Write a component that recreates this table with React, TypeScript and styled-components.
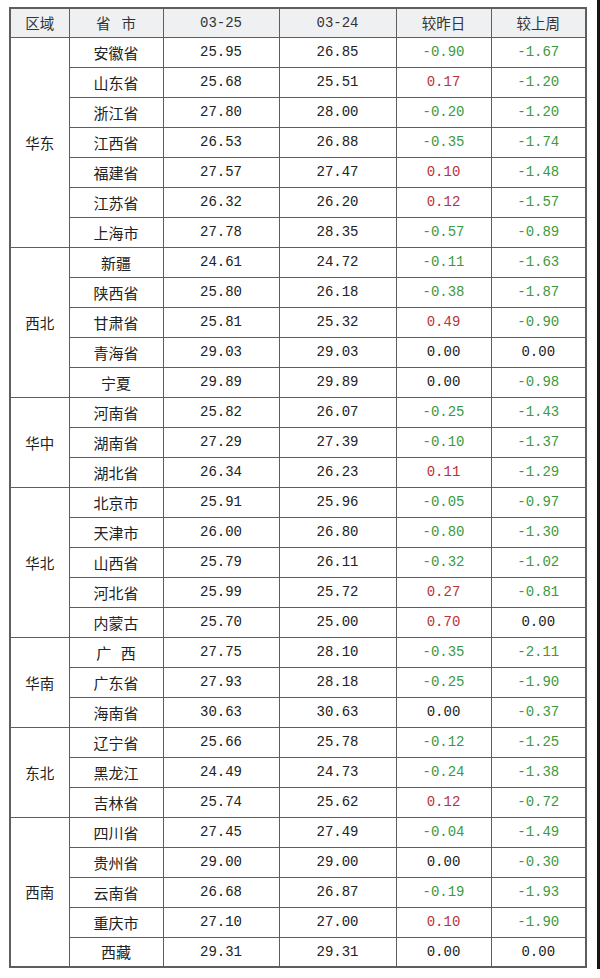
import styled, { createGlobalStyle } from 'styled-components'

type Row = [string, string, string, string, string]

const regions: { name: string; rows: Row[] }[] = [
	{
		name: '华东',
		rows: [
			['安徽省', '25.95', '26.85', '-0.90', '-1.67'],
			['山东省', '25.68', '25.51', '0.17', '-1.20'],
			['浙江省', '27.80', '28.00', '-0.20', '-1.20'],
			['江西省', '26.53', '26.88', '-0.35', '-1.74'],
			['福建省', '27.57', '27.47', '0.10', '-1.48'],
			['江苏省', '26.32', '26.20', '0.12', '-1.57'],
			['上海市', '27.78', '28.35', '-0.57', '-0.89'],
		],
	},
	{
		name: '西北',
		rows: [
			['新疆', '24.61', '24.72', '-0.11', '-1.63'],
			['陕西省', '25.80', '26.18', '-0.38', '-1.87'],
			['甘肃省', '25.81', '25.32', '0.49', '-0.90'],
			['青海省', '29.03', '29.03', '0.00', '0.00'],
			['宁夏', '29.89', '29.89', '0.00', '-0.98'],
		],
	},
	{
		name: '华中',
		rows: [
			['河南省', '25.82', '26.07', '-0.25', '-1.43'],
			['湖南省', '27.29', '27.39', '-0.10', '-1.37'],
			['湖北省', '26.34', '26.23', '0.11', '-1.29'],
		],
	},
	{
		name: '华北',
		rows: [
			['北京市', '25.91', '25.96', '-0.05', '-0.97'],
			['天津市', '26.00', '26.80', '-0.80', '-1.30'],
			['山西省', '25.79', '26.11', '-0.32', '-1.02'],
			['河北省', '25.99', '25.72', '0.27', '-0.81'],
			['内蒙古', '25.70', '25.00', '0.70', '0.00'],
		],
	},
	{
		name: '华南',
		rows: [
			['广 西', '27.75', '28.10', '-0.35', '-2.11'],
			['广东省', '27.93', '28.18', '-0.25', '-1.90'],
			['海南省', '30.63', '30.63', '0.00', '-0.37'],
		],
	},
	{
		name: '东北',
		rows: [
			['辽宁省', '25.66', '25.78', '-0.12', '-1.25'],
			['黑龙江', '24.49', '24.73', '-0.24', '-1.38'],
			['吉林省', '25.74', '25.62', '0.12', '-0.72'],
		],
	},
	{
		name: '西南',
		rows: [
			['四川省', '27.45', '27.49', '-0.04', '-1.49'],
			['贵州省', '29.00', '29.00', '0.00', '-0.30'],
			['云南省', '26.68', '26.87', '-0.19', '-1.93'],
			['重庆市', '27.10', '27.00', '0.10', '-1.90'],
			['西藏', '29.31', '29.31', '0.00', '0.00'],
		],
	},
]

const tone = (v: string) => (v.startsWith('-') ? 'down' : parseFloat(v) > 0 ? 'up' : 'flat')

export default function App() {
	return (
		<>
			<GlobalStyle />
			<Frame>
				<Table>
					<colgroup>
						<col style={{ width: 59 }} />
						<col style={{ width: 94 }} />
						<col style={{ width: 116 }} />
						<col style={{ width: 117 }} />
						<col style={{ width: 95 }} />
						<col style={{ width: 95 }} />
					</colgroup>
					<thead>
						<HeadRow>
							<HeadCell>区域</HeadCell>
							<HeadCell>省 市</HeadCell>
							<HeadCell $num>03-25</HeadCell>
							<HeadCell $num>03-24</HeadCell>
							<HeadCell>较昨日</HeadCell>
							<HeadCell>较上周</HeadCell>
						</HeadRow>
					</thead>
					<tbody>
						{regions.map(region =>
							region.rows.map((row, i) => (
								<BodyRow key={region.name + row[0]}>
									{i === 0 && <RegionCell rowSpan={region.rows.length}>{region.name}</RegionCell>}
									<NameCell>{row[0]}</NameCell>
									<NumCell>{row[1]}</NumCell>
									<NumCell>{row[2]}</NumCell>
									<NumCell $tone={tone(row[3])}>{row[3]}</NumCell>
									<NumCell $tone={tone(row[4])}>{row[4]}</NumCell>
								</BodyRow>
							))
						)}
					</tbody>
				</Table>
			</Frame>
		</>
	)
}

const GlobalStyle = createGlobalStyle`
	html, body {
		margin: 0;
		padding: 0;
		background: #ffffff;
	}
	* {
		box-sizing: border-box;
	}
`

const Frame = styled.div`
	width: 600px;
	height: 969px;
	padding: 7px 0 0 9px;
	border-right: 3px solid #151515;
	background: #ffffff;
`

const Table = styled.table`
	width: 576px;
	table-layout: fixed;
	border-collapse: collapse;
	border: 2px solid #5e5e5e;
	font-family: 'Noto Sans CJK SC', 'Noto Sans', sans-serif;
	color: #222;
`

const HeadRow = styled.tr`
	height: 29px;
	background: #eef0f2;
`

const BodyRow = styled.tr`
	height: 30px;
`

const HeadCell = styled.th<{ $num?: boolean }>`
	border: 1px solid #5e5e5e;
	padding: 0;
	text-align: center;
	font-weight: 400;
	font-size: ${p => (p.$num ? '14px' : '14.5px')};
	font-family: ${p =>
		p.$num ? "'Liberation Mono', monospace" : "'Noto Sans CJK SC', sans-serif"};
	word-spacing: 8px;
	color: #333;
`

const RegionCell = styled.td`
	border: 1px solid #5e5e5e;
	padding: 0;
	text-align: center;
	font-size: 14.5px;
	color: #222;
`

const NameCell = styled.td`
	border: 1px solid #5e5e5e;
	padding: 0;
	text-align: center;
	font-size: 15px;
	word-spacing: 6px;
	color: #222;
`

const NumCell = styled.td<{ $tone?: 'up' | 'down' | 'flat' }>`
	border: 1px solid #5e5e5e;
	padding: 0;
	text-align: center;
	font-family: 'Liberation Mono', 'DejaVu Sans Mono', monospace;
	font-size: 14px;
	color: ${p => (p.$tone === 'down' ? '#3c9a3c' : p.$tone === 'up' ? '#b8333a' : '#222')};
`
